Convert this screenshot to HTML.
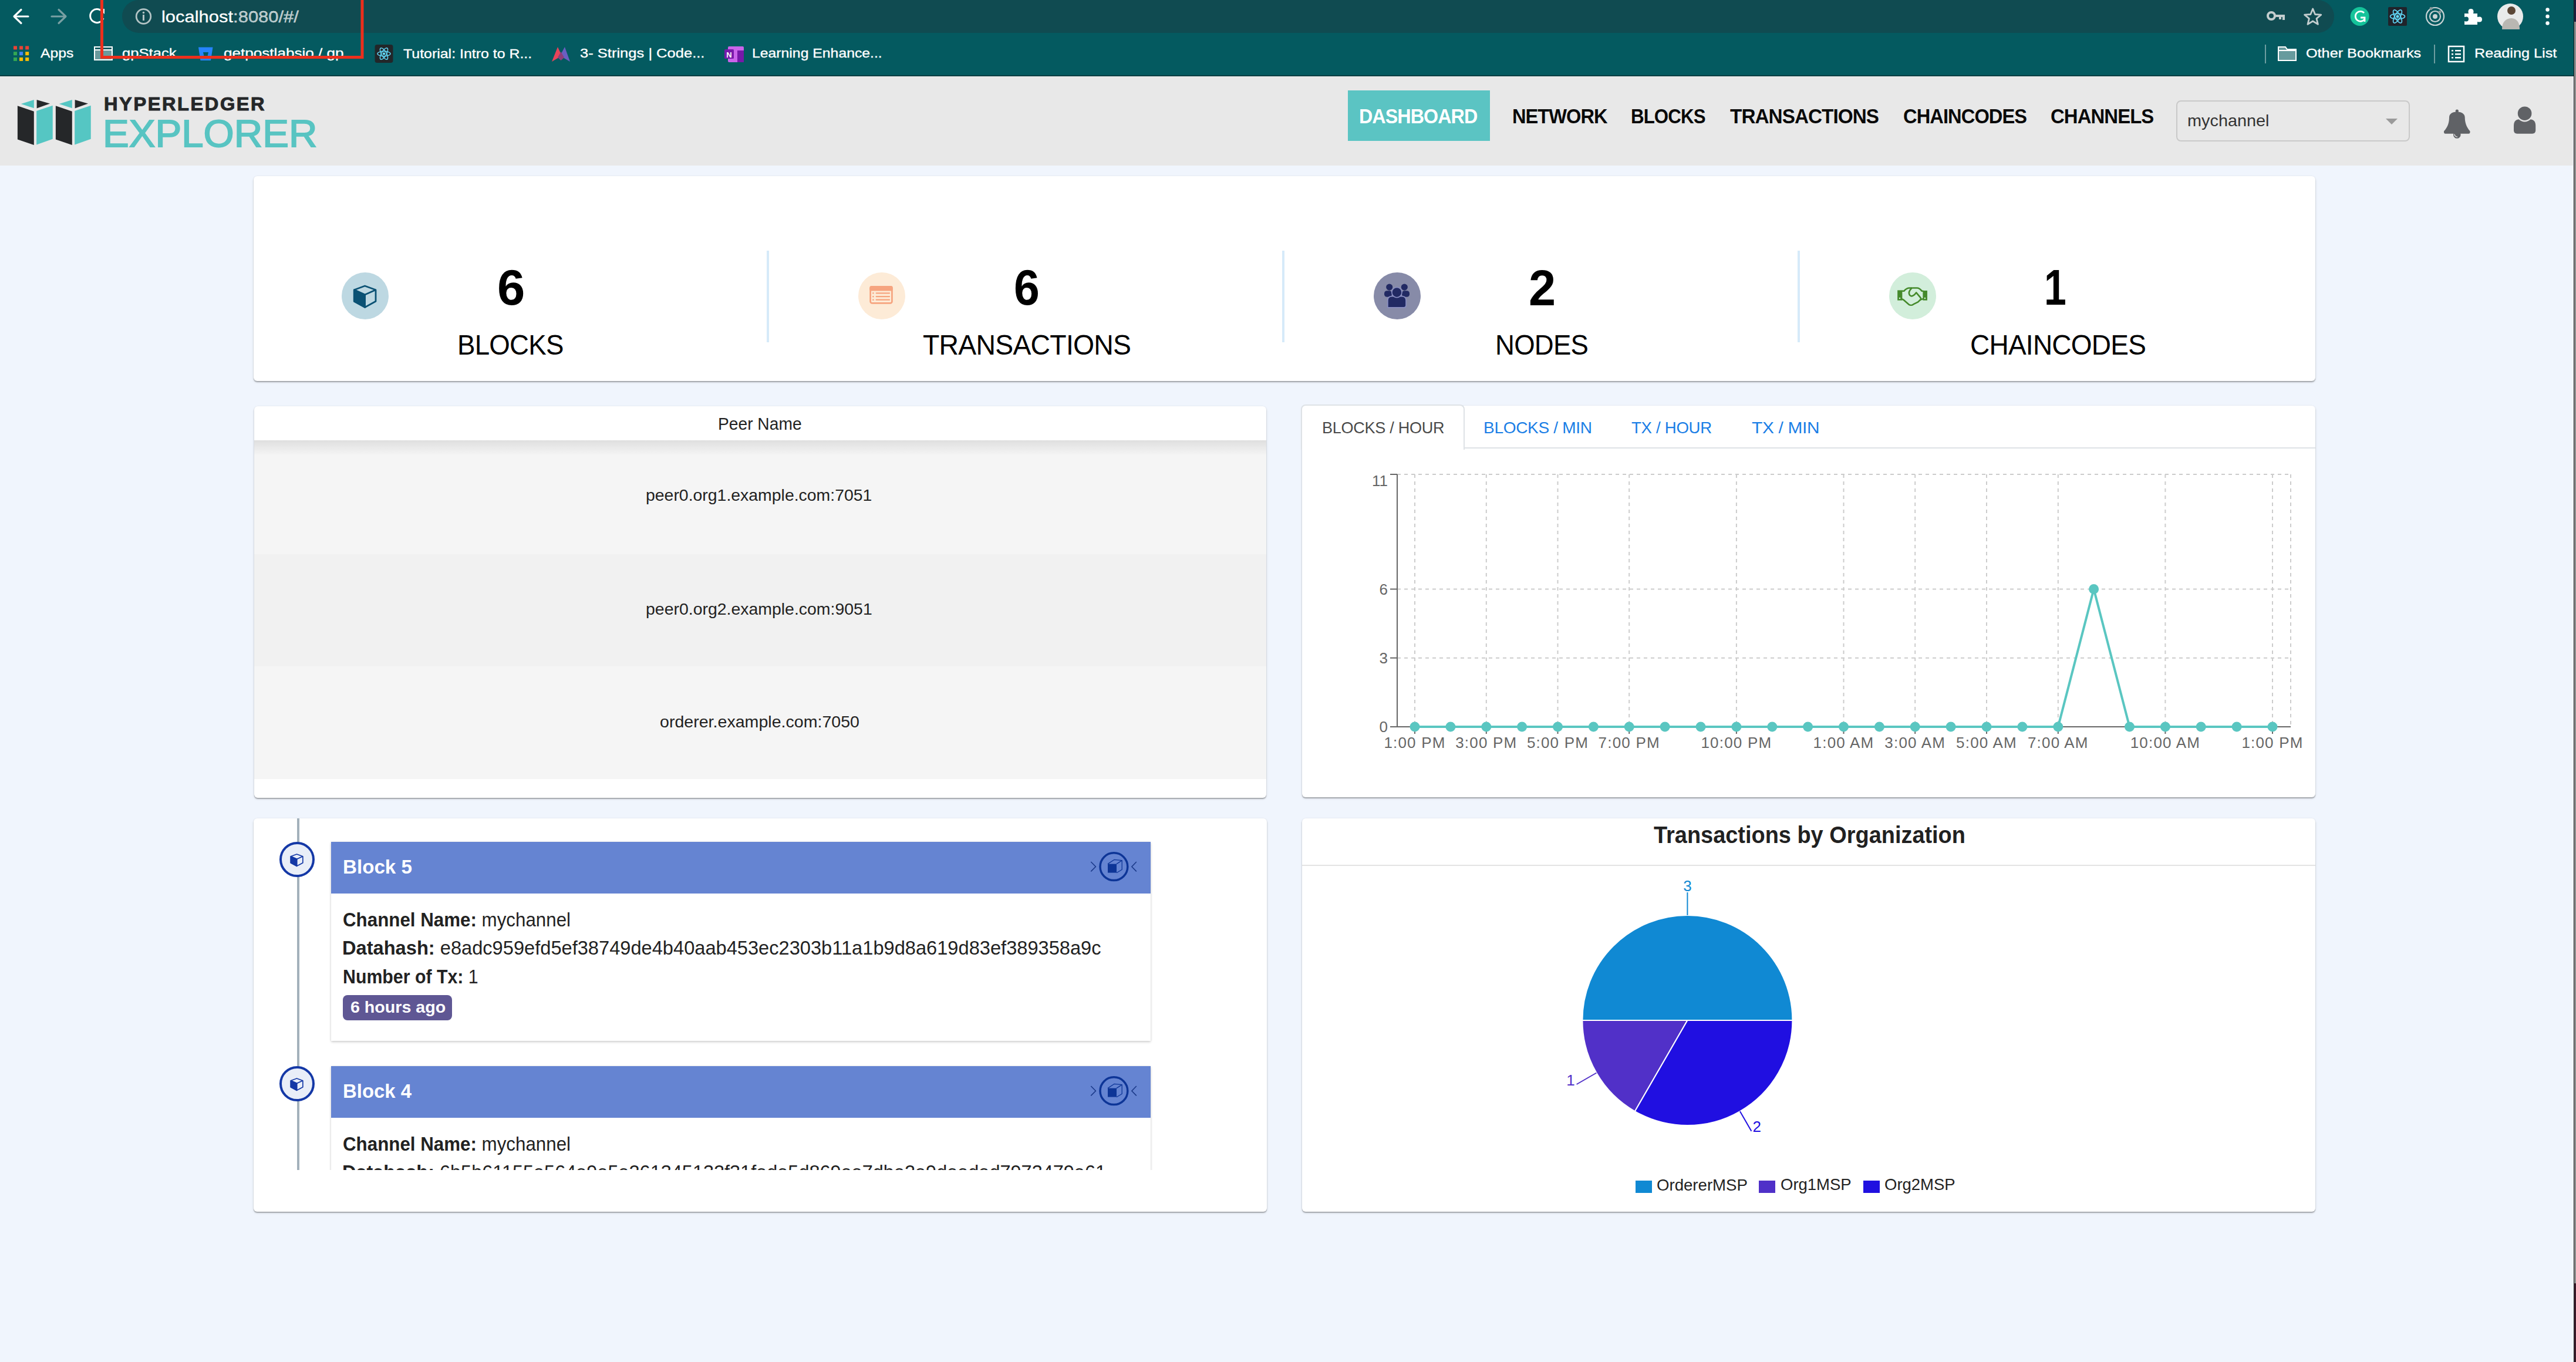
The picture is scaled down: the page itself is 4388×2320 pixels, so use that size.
<!DOCTYPE html>
<html><head><meta charset="utf-8">
<style>
html,body{margin:0;padding:0;}
body{width:4388px;height:2320px;position:relative;overflow:hidden;background:#f0f5fd;font-family:"Liberation Sans",sans-serif;color:#000;}
.a{position:absolute;white-space:nowrap;line-height:1;}
.bm{font-size:23px;color:#fff;letter-spacing:1.2px;}
.nav{font-size:35px;font-weight:bold;color:#0a0a0a;}
.card{position:absolute;background:#fff;border-radius:6px;box-shadow:0 2px 1.5px rgba(0,0,0,0.26),0 2px 4px rgba(0,0,0,0.10),0 0 2px rgba(0,0,0,0.08);}
.num{font-size:85px;font-weight:bold;color:#000;}
.lbl{font-size:48px;color:#000;}
.peer{font-size:28px;color:#222;}
.tab{font-size:30px;color:#1a7ae0;}
.bt{font-size:33.5px;font-weight:bold;color:#fff;}
.bd{font-size:32.5px;color:#222;}
.bd b{color:#1c1c1c;}
.ax{font-size:26px;color:#666;}
.lg{font-size:28px;color:#222;}
</style></head>
<body>
<!-- ============ BROWSER CHROME ============ -->
<div class="a" style="left:0;top:0;width:4388px;height:128px;background:#045a60;"></div>
<div class="a" style="left:0;top:128px;width:4388px;height:2px;background:#0b3e43;"></div>
<div class="a" style="left:208px;top:0;width:3768px;height:56px;background:#104b51;border-radius:28px;"></div>
<div id="chrome-text">
</div>
<!-- scrollbar edge -->
<div class="a" style="left:4384px;top:0;width:1px;height:2320px;background:#1a1a1a;"></div>
<div class="a" style="left:4385px;top:0;width:3px;height:2320px;background:#8e8e8e;"></div>
<div class="a" style="left:4385px;top:0;width:3px;height:37px;background:#1f1f3f;"></div>
<div class="a" style="left:4385px;top:2186px;width:3px;height:134px;background:#3b1c2b;"></div>

<!-- ============ APP HEADER ============ -->
<div class="a" style="left:0;top:130px;width:4383px;height:152px;background:#e8e8e8;"></div>
<div class="a" style="left:2296px;top:154px;width:242px;height:86px;background:#5bc4c3;"></div>
<div class="a" style="left:3707px;top:171px;width:394px;height:66px;border:2px solid #c9c9c9;border-radius:8px;"></div>

<!-- ============ STATS CARD ============ -->
<div class="card" style="left:432px;top:300px;width:3512px;height:349px;"></div>
<div class="a" style="left:1306px;top:427px;width:4px;height:156px;background:#d6eaf9;"></div>
<div class="a" style="left:2184px;top:427px;width:4px;height:156px;background:#d6eaf9;"></div>
<div class="a" style="left:3062px;top:427px;width:4px;height:156px;background:#d6eaf9;"></div>
<div class="a" style="left:582px;top:464px;width:80px;height:80px;border-radius:50%;background:#bdd8e2;"></div>
<div class="a" style="left:1462px;top:464px;width:80px;height:80px;border-radius:50%;background:#fdebd7;"></div>
<div class="a" style="left:2340px;top:464px;width:80px;height:80px;border-radius:50%;background:#878ba8;"></div>
<div class="a" style="left:3218px;top:464px;width:80px;height:80px;border-radius:50%;background:#d2eedb;"></div>

<!-- ============ PEER CARD ============ -->
<div class="card" style="left:433px;top:692px;width:1724px;height:667px;overflow:hidden;">
  <div style="position:absolute;left:0;top:58px;width:100%;height:194px;background:#f5f5f5;"></div>
  <div style="position:absolute;left:0;top:252px;width:100%;height:191px;background:#f1f1f1;"></div>
  <div style="position:absolute;left:0;top:443px;width:100%;height:192px;background:#f5f5f5;"></div>
  <div style="position:absolute;left:0;top:58px;width:100%;height:26px;background:linear-gradient(rgba(0,0,0,0.09),rgba(0,0,0,0));"></div>
</div>

<!-- ============ CHART CARD ============ -->
<div class="card" style="left:2218px;top:691px;width:1726px;height:667px;"></div>
<div class="a" style="left:2218px;top:762px;width:1726px;height:2px;background:#dee2e6;"></div>
<div class="a" style="left:2216px;top:689px;width:275px;height:75px;background:#fff;border:2px solid #dee2e6;border-bottom:none;border-radius:8px 8px 0 0;"></div>

<!-- ============ BLOCK LIST CARD ============ -->
<div class="card" style="left:432px;top:1394px;width:1726px;height:670px;"></div>
<div class="a" style="left:432px;top:1394px;width:1726px;height:599px;overflow:hidden;">
  <div style="position:absolute;left:74px;top:0;width:4px;height:599px;background:#a3b1bb;"></div>
  <!-- block 5 -->
  <div style="position:absolute;left:132px;top:40px;width:1396px;height:339px;background:#fff;box-shadow:0 2px 4px rgba(0,0,0,0.18),0 0 3px rgba(0,0,0,0.08);"></div>
  <div style="position:absolute;left:132px;top:40px;width:1396px;height:88px;background:#6584d2;"></div>
  <!-- block 4 -->
  <div style="position:absolute;left:132px;top:422px;width:1396px;height:339px;background:#fff;box-shadow:0 2px 4px rgba(0,0,0,0.18),0 0 3px rgba(0,0,0,0.08);"></div>
  <div style="position:absolute;left:132px;top:422px;width:1396px;height:88px;background:#6584d2;"></div>
  <div style="position:absolute;left:152px;top:301px;width:186px;height:43px;border-radius:8px;background:#5f5794;"></div>
</div>

<!-- ============ PIE CARD ============ -->
<div class="card" style="left:2218px;top:1394px;width:1726px;height:670px;"></div>
<div class="a" style="left:2218px;top:1473px;width:1726px;height:2px;background:#e3e3e3;"></div>
<div class="a" style="left:2786px;top:2011px;width:28px;height:21px;background:#1089d3;"></div>
<div class="a" style="left:2996px;top:2011px;width:28px;height:21px;background:#4f30c8;"></div>
<div class="a" style="left:3174px;top:2011px;width:28px;height:21px;background:#2010e0;"></div>

<div class="a" style="left:274.8px;top:15.0px;font-size:28px;color:#fff;-webkit-text-stroke:0.3px #fff;transform:scaleX(1.1048);transform-origin:0 0;">localhost<span style="color:#b3c4c6">:8080/#/</span></div>
<div class="a" style="left:69.0px;top:80.0px;font-size:22.5px;color:#fff;-webkit-text-stroke:0.35px #fff;transform:scaleX(1.0980);transform-origin:0 0;">Apps</div>
<div class="a" style="left:207.9px;top:80.0px;font-size:22.5px;color:#fff;-webkit-text-stroke:0.35px #fff;transform:scaleX(1.1375);transform-origin:0 0;">gpStack</div>
<div class="a" style="left:380.8px;top:80.0px;font-size:22.5px;color:#fff;-webkit-text-stroke:0.35px #fff;transform:scaleX(1.1600);transform-origin:0 0;">getpostlabsio / gp</div>
<div class="a" style="left:687.0px;top:81.0px;font-size:22.5px;color:#fff;-webkit-text-stroke:0.35px #fff;transform:scaleX(1.1071);transform-origin:0 0;">Tutorial: Intro to R...</div>
<div class="a" style="left:987.9px;top:80.0px;font-size:22.5px;color:#fff;-webkit-text-stroke:0.35px #fff;transform:scaleX(1.1351);transform-origin:0 0;">3- Strings | Code...</div>
<div class="a" style="left:1280.8px;top:80.0px;font-size:22.5px;color:#fff;-webkit-text-stroke:0.35px #fff;transform:scaleX(1.1010);transform-origin:0 0;">Learning Enhance...</div>
<div class="a" style="left:3927.9px;top:80.0px;font-size:22.5px;color:#fff;-webkit-text-stroke:0.35px #fff;transform:scaleX(1.1207);transform-origin:0 0;">Other Bookmarks</div>
<div class="a" style="left:4214.8px;top:80.0px;font-size:22.5px;color:#fff;-webkit-text-stroke:0.35px #fff;transform:scaleX(1.1220);transform-origin:0 0;">Reading List</div>
<div class="a" style="left:177.0px;top:161.0px;font-size:32px;font-weight:bold;color:#252729;-webkit-text-stroke:1.0px #252729;letter-spacing:2.5px;transform:scaleX(1.0188);transform-origin:0 0;">HYPERLEDGER</div>
<div class="a" style="left:174.8px;top:195.5px;font-size:64.5px;color:#58c4c2;-webkit-text-stroke:1.8px #58c4c2;transform:scaleX(1.0405);transform-origin:0 0;">EXPLORER</div>
<div class="a" style="left:2315.2px;top:180.0px;font-size:35px;font-weight:bold;color:#fff;letter-spacing:-1px;transform:scaleX(0.9213);transform-origin:0 0;">DASHBOARD</div>
<div class="a" style="left:2576.1px;top:180.0px;font-size:35px;font-weight:bold;color:#0a0a0a;letter-spacing:-1px;transform:scaleX(0.9302);transform-origin:0 0;">NETWORK</div>
<div class="a" style="left:2778.2px;top:180.0px;font-size:35px;font-weight:bold;color:#0a0a0a;letter-spacing:-1px;transform:scaleX(0.8929);transform-origin:0 0;">BLOCKS</div>
<div class="a" style="left:2947.0px;top:180.0px;font-size:35px;font-weight:bold;color:#0a0a0a;letter-spacing:-1px;transform:scaleX(0.9511);transform-origin:0 0;">TRANSACTIONS</div>
<div class="a" style="left:3242.1px;top:180.0px;font-size:35px;font-weight:bold;color:#0a0a0a;letter-spacing:-1px;transform:scaleX(0.9330);transform-origin:0 0;">CHAINCODES</div>
<div class="a" style="left:3493.1px;top:180.0px;font-size:35px;font-weight:bold;color:#0a0a0a;letter-spacing:-1px;transform:scaleX(0.9405);transform-origin:0 0;">CHANNELS</div>
<div class="a" style="left:3725.9px;top:191.5px;font-size:28px;color:#333;transform:scaleX(1.0303);transform-origin:0 0;">mychannel</div>
<div class="a" style="left:847.0px;top:447.0px;font-size:85px;font-weight:bold;color:#000;transform:scaleX(1.0000);transform-origin:0 0;">6</div>
<div class="a" style="left:779.2px;top:563.0px;font-size:48.5px;color:#000;letter-spacing:-0.8px;transform:scaleX(0.9412);transform-origin:0 0;">BLOCKS</div>
<div class="a" style="left:1727.2px;top:447.0px;font-size:85px;font-weight:bold;color:#000;transform:scaleX(0.9268);transform-origin:0 0;">6</div>
<div class="a" style="left:1572.0px;top:563.0px;font-size:48.5px;color:#000;letter-spacing:-0.8px;transform:scaleX(0.9565);transform-origin:0 0;">TRANSACTIONS</div>
<div class="a" style="left:2604.1px;top:448.0px;font-size:85px;font-weight:bold;color:#000;transform:scaleX(0.9756);transform-origin:0 0;">2</div>
<div class="a" style="left:2547.2px;top:563.0px;font-size:48.5px;color:#000;letter-spacing:-0.8px;transform:scaleX(0.9387);transform-origin:0 0;">NODES</div>
<div class="a" style="left:3482.0px;top:447.0px;font-size:85px;font-weight:bold;color:#000;transform:scaleX(0.8000);transform-origin:0 0;">1</div>
<div class="a" style="left:3356.1px;top:563.0px;font-size:48.5px;color:#000;letter-spacing:-0.8px;transform:scaleX(0.9487);transform-origin:0 0;">CHAINCODES</div>
<div class="a" style="left:1223.1px;top:708.0px;font-size:29px;color:#222;transform:scaleX(0.9720);transform-origin:0 0;">Peer Name</div>
<div class="a" style="left:1099.5px;top:830.3px;font-size:28px;color:#222;transform:scaleX(1.0146);transform-origin:0 0;">peer0.org1.example.com:7051</div>
<div class="a" style="left:1099.5px;top:1023.7px;font-size:28px;color:#222;transform:scaleX(1.0156);transform-origin:0 0;">peer0.org2.example.com:9051</div>
<div class="a" style="left:1124.3px;top:1216.0px;font-size:28px;color:#222;transform:scaleX(1.0208);transform-origin:0 0;">orderer.example.com:7050</div>
<div class="a" style="left:2251.7px;top:715.4px;font-size:28px;color:#4a4a4a;letter-spacing:-0.3px;transform:scaleX(0.9660);transform-origin:0 0;">BLOCKS / HOUR</div>
<div class="a" style="left:2526.6px;top:715.4px;font-size:28px;color:#1a7ee6;letter-spacing:-0.3px;transform:scaleX(1.0006);transform-origin:0 0;">BLOCKS / MIN</div>
<div class="a" style="left:2779.0px;top:715.4px;font-size:28px;color:#1a7ee6;letter-spacing:-0.3px;transform:scaleX(0.9854);transform-origin:0 0;">TX / HOUR</div>
<div class="a" style="left:2983.9px;top:715.4px;font-size:28px;color:#1a7ee6;letter-spacing:-0.3px;transform:scaleX(1.0667);transform-origin:0 0;">TX / MIN</div>
<div class="a" style="left:583.9px;top:1459.2px;font-size:34px;font-weight:bold;color:#fff;transform:scaleX(0.9754);transform-origin:0 0;">Block 5</div>
<div class="a" style="left:584.4px;top:1551.3px;font-size:32.5px;color:#222;transform:scaleX(0.9633);transform-origin:0 0;"><b>Channel Name:</b> mychannel</div>
<div class="a" style="left:583.4px;top:1599.0px;font-size:32.5px;color:#222;transform:scaleX(1.0036);transform-origin:0 0;"><b>Datahash:</b> e8adc959efd5ef38749de4b40aab453ec2303b11a1b9d8a619d83ef389358a9c</div>
<div class="a" style="left:583.5px;top:1648.0px;font-size:32.5px;color:#222;transform:scaleX(0.9324);transform-origin:0 0;"><b>Number of Tx:</b> 1</div>
<div class="a" style="left:596.5px;top:1702.2px;font-size:27.5px;font-weight:bold;color:#fff;transform:scaleX(1.0409);transform-origin:0 0;">6 hours ago</div>
<div class="a" style="left:584.0px;top:1841.2px;font-size:34px;font-weight:bold;color:#fff;transform:scaleX(0.9672);transform-origin:0 0;">Block 4</div>
<div class="a" style="left:584.4px;top:1933.3px;font-size:32.5px;color:#222;transform:scaleX(0.9633);transform-origin:0 0;"><b>Channel Name:</b> mychannel</div>
<div class="a" style="left:583.4px;top:1981.0px;font-size:32.5px;color:#222;transform:scaleX(0.9989);transform-origin:0 0;"><b>Datahash:</b> 6b5b61155a564a9a5a261345132f31fada5d869aa7dba2a9daadad7973479a61</div>
<div class="a" style="left:2816.6px;top:1401.8px;font-size:41px;font-weight:bold;color:#212121;transform:scaleX(0.9248);transform-origin:0 0;">Transactions by Organization</div>
<div class="a" style="left:2821.7px;top:2005.4px;font-size:28px;color:#222;transform:scaleX(0.9858);transform-origin:0 0;">OrdererMSP</div>
<div class="a" style="left:3032.7px;top:2004.4px;font-size:28px;color:#222;transform:scaleX(0.9818);transform-origin:0 0;">Org1MSP</div>
<div class="a" style="left:3209.7px;top:2004.4px;font-size:28px;color:#222;transform:scaleX(0.9818);transform-origin:0 0;">Org2MSP</div>
<div class="a" style="left:440px;top:1993px;width:1710px;height:60px;background:#fff;"></div>
<!-- SVG OVERLAY -->
<svg class="a" style="left:0;top:0;" width="4388" height="2320" viewBox="0 0 4388 2320" id="ov">
<g stroke="#cccccc" stroke-width="2" stroke-dasharray="6 6" fill="none"><line x1="2380" y1="808.0" x2="3902" y2="808.0"/><line x1="2380" y1="1003.5" x2="3902" y2="1003.5"/><line x1="2380" y1="1120.7" x2="3902" y2="1120.7"/><line x1="2410.0" y1="808" x2="2410.0" y2="1238"/><line x1="2531.8" y1="808" x2="2531.8" y2="1238"/><line x1="2653.5" y1="808" x2="2653.5" y2="1238"/><line x1="2775.2" y1="808" x2="2775.2" y2="1238"/><line x1="2957.9" y1="808" x2="2957.9" y2="1238"/><line x1="3140.5" y1="808" x2="3140.5" y2="1238"/><line x1="3262.2" y1="808" x2="3262.2" y2="1238"/><line x1="3384.0" y1="808" x2="3384.0" y2="1238"/><line x1="3505.8" y1="808" x2="3505.8" y2="1238"/><line x1="3688.4" y1="808" x2="3688.4" y2="1238"/><line x1="3871.0" y1="808" x2="3871.0" y2="1238"/><line x1="3902" y1="808" x2="3902" y2="1238"/></g>
<g stroke="#666666" stroke-width="2" fill="none"><line x1="2380" y1="808" x2="2380" y2="1239"/><line x1="2380" y1="1238" x2="3902" y2="1238"/><line x1="2368" y1="808.0" x2="2380" y2="808.0"/><line x1="2368" y1="1003.5" x2="2380" y2="1003.5"/><line x1="2368" y1="1120.7" x2="2380" y2="1120.7"/><line x1="2368" y1="1238.0" x2="2380" y2="1238.0"/><line x1="2410.0" y1="1238" x2="2410.0" y2="1250"/><line x1="2531.8" y1="1238" x2="2531.8" y2="1250"/><line x1="2653.5" y1="1238" x2="2653.5" y2="1250"/><line x1="2775.2" y1="1238" x2="2775.2" y2="1250"/><line x1="2957.9" y1="1238" x2="2957.9" y2="1250"/><line x1="3140.5" y1="1238" x2="3140.5" y2="1250"/><line x1="3262.2" y1="1238" x2="3262.2" y2="1250"/><line x1="3384.0" y1="1238" x2="3384.0" y2="1250"/><line x1="3505.8" y1="1238" x2="3505.8" y2="1250"/><line x1="3688.4" y1="1238" x2="3688.4" y2="1250"/><line x1="3871.0" y1="1238" x2="3871.0" y2="1250"/></g>
<g font-family="Liberation Sans" font-size="26" fill="#666666"><text x="2364" y="827.6" text-anchor="end">11</text><text x="2364" y="1012.5" text-anchor="end">6</text><text x="2364" y="1129.7" text-anchor="end">3</text><text x="2364" y="1247.0" text-anchor="end">0</text></g>
<g font-family="Liberation Sans" font-size="26" fill="#666666" letter-spacing="1.2"><text x="2410.0" y="1273.5" text-anchor="middle">1:00 PM</text><text x="2531.8" y="1273.5" text-anchor="middle">3:00 PM</text><text x="2653.5" y="1273.5" text-anchor="middle">5:00 PM</text><text x="2775.2" y="1273.5" text-anchor="middle">7:00 PM</text><text x="2957.9" y="1273.5" text-anchor="middle">10:00 PM</text><text x="3140.5" y="1273.5" text-anchor="middle">1:00 AM</text><text x="3262.2" y="1273.5" text-anchor="middle">3:00 AM</text><text x="3384.0" y="1273.5" text-anchor="middle">5:00 AM</text><text x="3505.8" y="1273.5" text-anchor="middle">7:00 AM</text><text x="3688.4" y="1273.5" text-anchor="middle">10:00 AM</text><text x="3871.0" y="1273.5" text-anchor="middle">1:00 PM</text></g>
<polyline points="2410.0,1238.0 2470.9,1238.0 2531.8,1238.0 2592.6,1238.0 2653.5,1238.0 2714.4,1238.0 2775.2,1238.0 2836.1,1238.0 2897.0,1238.0 2957.9,1238.0 3018.8,1238.0 3079.6,1238.0 3140.5,1238.0 3201.4,1238.0 3262.2,1238.0 3323.1,1238.0 3384.0,1238.0 3444.9,1238.0 3505.8,1238.0 3566.6,1003.5 3627.5,1238.0 3688.4,1238.0 3749.2,1238.0 3810.1,1238.0 3871.0,1238.0" fill="none" stroke="#5ac6c1" stroke-width="4" stroke-linejoin="round"/>
<g fill="#5ac6c1"><circle cx="2410.0" cy="1238.0" r="8.5"/><circle cx="2470.9" cy="1238.0" r="8.5"/><circle cx="2531.8" cy="1238.0" r="8.5"/><circle cx="2592.6" cy="1238.0" r="8.5"/><circle cx="2653.5" cy="1238.0" r="8.5"/><circle cx="2714.4" cy="1238.0" r="8.5"/><circle cx="2775.2" cy="1238.0" r="8.5"/><circle cx="2836.1" cy="1238.0" r="8.5"/><circle cx="2897.0" cy="1238.0" r="8.5"/><circle cx="2957.9" cy="1238.0" r="8.5"/><circle cx="3018.8" cy="1238.0" r="8.5"/><circle cx="3079.6" cy="1238.0" r="8.5"/><circle cx="3140.5" cy="1238.0" r="8.5"/><circle cx="3201.4" cy="1238.0" r="8.5"/><circle cx="3262.2" cy="1238.0" r="8.5"/><circle cx="3323.1" cy="1238.0" r="8.5"/><circle cx="3384.0" cy="1238.0" r="8.5"/><circle cx="3444.9" cy="1238.0" r="8.5"/><circle cx="3505.8" cy="1238.0" r="8.5"/><circle cx="3566.6" cy="1003.5" r="8.5"/><circle cx="3627.5" cy="1238.0" r="8.5"/><circle cx="3688.4" cy="1238.0" r="8.5"/><circle cx="3749.2" cy="1238.0" r="8.5"/><circle cx="3810.1" cy="1238.0" r="8.5"/><circle cx="3871.0" cy="1238.0" r="8.5"/></g>
<path d="M2874.4,1738 L3053.40,1738.00 A179,179 0 0 0 2695.40,1738.00 Z" fill="#1089d3" stroke="#fff" stroke-width="2"/>
<path d="M2874.4,1738 L2695.40,1738.00 A179,179 0 0 0 2784.90,1893.02 Z" fill="#5130c8" stroke="#fff" stroke-width="2"/>
<path d="M2874.4,1738 L2784.90,1893.02 A179,179 0 0 0 3053.40,1738.00 Z" fill="#200fe1" stroke="#fff" stroke-width="2"/>
<line x1="2874.4" y1="1559.0" x2="2874.4" y2="1520.0" stroke="#1089d3" stroke-width="2"/>
<text x="2874.4" y="1517.5" text-anchor="middle" font-family="Liberation Sans" font-size="26" fill="#1089d3">3</text>
<line x1="2719.4" y1="1827.5" x2="2685.6" y2="1847.0" stroke="#5130c8" stroke-width="2"/>
<text x="2682.6" y="1849.0" text-anchor="end" font-family="Liberation Sans" font-size="26" fill="#5130c8">1</text>
<line x1="2963.9" y1="1893.0" x2="2983.4" y2="1926.8" stroke="#200fe1" stroke-width="2"/>
<text x="2985.4" y="1927.8" text-anchor="start" font-family="Liberation Sans" font-size="26" fill="#200fe1">2</text>
<polygon fill="#252729" points="29.90,180.20 57.80,189.70 57.80,247.00 29.90,237.50"/>
<polygon fill="#55c6c3" points="62.20,189.00 89.75,179.80 89.75,236.70 62.20,246.60"/>
<polygon fill="#55c6c3" points="35.80,176.90 57.80,169.90 57.80,184.20"/>
<polygon fill="#252729" points="62.60,169.90 85.00,176.50 62.60,184.60"/>
<polygon fill="#252729" points="94.90,180.20 122.80,189.70 122.80,247.00 94.90,237.50"/>
<polygon fill="#55c6c3" points="127.20,189.00 154.75,179.80 154.75,236.70 127.20,246.60"/>
<polygon fill="#55c6c3" points="100.80,176.90 122.80,169.90 122.80,184.20"/>
<polygon fill="#252729" points="127.60,169.90 150.00,176.50 127.60,184.60"/>
<polygon points="621.50,487.00 640.00,493.80 640.00,513.20 621.50,523.40 603.30,513.20 603.30,493.80" fill="none" stroke="#0b5274" stroke-width="2.8" stroke-linejoin="round"/><polygon points="603.30,493.80 621.50,502.00 621.50,523.40 603.30,513.20" fill="#0b5274" stroke="#0b5274" stroke-width="2.8" stroke-linejoin="round"/><polyline points="603.30,493.80 621.50,502.00 640.00,493.80" fill="none" stroke="#0b5274" stroke-width="2.8" stroke-linejoin="round"/><line x1="621.50" y1="502.00" x2="621.50" y2="523.40" stroke="#0b5274" stroke-width="2.8"/>
<rect x="1482.6499999999999" y="488.35" width="36.8" height="28.1" rx="3" fill="none" stroke="#f6a47f" stroke-width="2.7"/>
<rect x="1481.3" y="487" width="39.5" height="8.5" rx="3" fill="#f6a47f"/>
<line x1="1492.7" y1="499.3" x2="1515" y2="499.3" stroke="#f6a47f" stroke-width="2.3" stroke-linecap="round"/>
<rect x="1486.2" y="498.1" width="2.4" height="2.4" fill="#f6a47f"/>
<line x1="1492.7" y1="505.2" x2="1515" y2="505.2" stroke="#f6a47f" stroke-width="2.3" stroke-linecap="round"/>
<rect x="1486.2" y="504.0" width="2.4" height="2.4" fill="#f6a47f"/>
<line x1="1492.7" y1="510.7" x2="1515" y2="510.7" stroke="#f6a47f" stroke-width="2.3" stroke-linecap="round"/>
<rect x="1486.2" y="509.5" width="2.4" height="2.4" fill="#f6a47f"/>
<circle cx="2366.7" cy="489.1" r="5.6" fill="#222a63"/>
<circle cx="2392.3" cy="489.1" r="5.6" fill="#222a63"/>
<rect x="2358" y="495.3" width="13" height="10.5" rx="4.5" fill="#222a63"/>
<rect x="2388" y="495.3" width="13" height="10.5" rx="4.5" fill="#222a63"/>
<path d="M2363.9,523.7 L2363.9,512 Q2363.9,504.6 2371,504.6 L2388,504.6 Q2395,504.6 2395,512 L2395,520 Q2395,523.7 2391,523.7 Z" fill="#222a63" stroke="#8b90c4" stroke-width="1.6"/>
<circle cx="2379.4" cy="498.1" r="8.6" fill="#222a63" stroke="#8b90c4" stroke-width="1.6"/>
<rect x="3232.16" y="494.39" width="8.20" height="17.27" fill="#458a2b"/>
<rect x="3275.35" y="495.00" width="7.59" height="16.66" fill="#458a2b"/>
<circle cx="3236.05" cy="507.96" r="1.3" fill="#d2eedb"/>
<circle cx="3278.92" cy="507.96" r="1.3" fill="#d2eedb"/>
<path d="M3240.37,495.81 L3243.14,495.81 C3245.61,492.85 3248.08,490.50 3253.01,490.50 L3256.72,490.50 M3258.57,490.50 L3265.35,490.50 C3269.05,490.50 3271.52,492.85 3273.68,495.81 L3275.53,495.81 M3240.37,509.62 L3242.53,510.74 L3250.55,517.83 C3253.01,520.30 3256.72,520.30 3259.18,518.45 L3267.20,514.44 L3270.29,511.35 C3272.76,509.50 3273.99,509.19 3275.53,509.19 M3256.72,490.50 C3253.01,494.08 3250.55,499.01 3253.01,502.72 C3255.48,505.80 3259.80,504.57 3264.12,498.40 L3271.52,507.03 C3272.45,508.88 3271.52,510.74 3270.29,511.35" fill="none" stroke="#458a2b" stroke-width="2.6" stroke-linecap="round" stroke-linejoin="round"/>
<circle cx="506" cy="1464" r="28" fill="#e9eef8" stroke="#1438a6" stroke-width="4"/>
<polygon points="505.50,1455.00 515.83,1458.80 515.83,1469.64 505.50,1475.34 495.33,1469.64 495.33,1458.80" fill="none" stroke="#1438a6" stroke-width="1.7" stroke-linejoin="round"/><polygon points="495.33,1458.80 505.50,1463.38 505.50,1475.34 495.33,1469.64" fill="#1438a6" stroke="#1438a6" stroke-width="1.7" stroke-linejoin="round"/><polyline points="495.33,1458.80 505.50,1463.38 515.83,1458.80" fill="none" stroke="#1438a6" stroke-width="1.7" stroke-linejoin="round"/><line x1="505.50" y1="1463.38" x2="505.50" y2="1475.34" stroke="#1438a6" stroke-width="1.7"/>
<circle cx="1897.4" cy="1476.2" r="23.4" fill="none" stroke="#0d3597" stroke-width="3.5"/>
<rect x="1887" y="1471.6000000000001" width="15" height="15" fill="#0d3597"/>
<path d="M1887,1471.6000000000001 L1898.2,1464.3 L1911.2,1465.6000000000001 L1902,1471.6000000000001 M1911.2,1465.6000000000001 L1911.2,1481.2 L1902,1486.7" fill="none" stroke="#0d3597" stroke-width="1.3" stroke-linejoin="round"/>
<path d="M1858.3,1468.0 L1866.4,1476.2 L1858.3,1484.4 M1935.8,1468.0 L1927.9,1476.2 L1935.8,1484.4" fill="none" stroke="#1b3a8a" stroke-width="1.6"/>
<circle cx="506" cy="1846" r="28" fill="#e9eef8" stroke="#1438a6" stroke-width="4"/>
<polygon points="505.50,1837.00 515.83,1840.80 515.83,1851.64 505.50,1857.34 495.33,1851.64 495.33,1840.80" fill="none" stroke="#1438a6" stroke-width="1.7" stroke-linejoin="round"/><polygon points="495.33,1840.80 505.50,1845.38 505.50,1857.34 495.33,1851.64" fill="#1438a6" stroke="#1438a6" stroke-width="1.7" stroke-linejoin="round"/><polyline points="495.33,1840.80 505.50,1845.38 515.83,1840.80" fill="none" stroke="#1438a6" stroke-width="1.7" stroke-linejoin="round"/><line x1="505.50" y1="1845.38" x2="505.50" y2="1857.34" stroke="#1438a6" stroke-width="1.7"/>
<circle cx="1897.4" cy="1858.2" r="23.4" fill="none" stroke="#0d3597" stroke-width="3.5"/>
<rect x="1887" y="1853.6000000000001" width="15" height="15" fill="#0d3597"/>
<path d="M1887,1853.6000000000001 L1898.2,1846.3 L1911.2,1847.6000000000001 L1902,1853.6000000000001 M1911.2,1847.6000000000001 L1911.2,1863.2 L1902,1868.7" fill="none" stroke="#0d3597" stroke-width="1.3" stroke-linejoin="round"/>
<path d="M1858.3,1850.0 L1866.4,1858.2 L1858.3,1866.4 M1935.8,1850.0 L1927.9,1858.2 L1935.8,1866.4" fill="none" stroke="#1b3a8a" stroke-width="1.6"/>
<circle cx="4185.3" cy="189.2" r="2.6" fill="#606266"/>
<path d="M4163,223.5 C4170,216 4172,208 4172,200 C4172,193.5 4178,190.5 4185.3,190.5 C4192.5,190.5 4198.7,193.5 4198.7,200 C4198.7,208 4201,216 4207.5,223.5 Q4208,227.7 4205,227.7 L4165.5,227.7 Q4162.5,227.7 4163,223.5 Z" fill="#606266"/>
<circle cx="4185.3" cy="229.5" r="6.3" fill="#606266"/><path d="M4181,228.5 A4.5,4.5 0 0 0 4186,233" fill="none" stroke="#e8e8e8" stroke-width="1.3"/>
<path d="M4282,222 L4282,214 Q4282,203 4293,203 L4308,203 Q4319.2,203 4319.2,214 L4319.2,222 Q4319.2,227.7 4313.5,227.7 L4287.7,227.7 Q4282,227.7 4282,222 Z" fill="#606266"/>
<circle cx="4300.6" cy="193.2" r="13" fill="#606266" stroke="#e8e8e8" stroke-width="2.4"/>
<polygon points="4064,202 4084,202 4074,212" fill="#9a9a9a"/>
<path d="M48,28 H25 M36,16.5 L24,28 L36,39.5" fill="none" stroke="#ffffff" stroke-width="3.2" stroke-linecap="round" stroke-linejoin="round"/>
<path d="M88,28 H111 M100,16.5 L112,28 L100,39.5" fill="none" stroke="#79a0a3" stroke-width="3.2" stroke-linecap="round" stroke-linejoin="round"/>
<path d="M175.5,22 A11.5,11.5 0 1 0 176,31" fill="none" stroke="#ffffff" stroke-width="3"/>
<polygon points="169,15 178,15 178,24" fill="#ffffff"/>
<circle cx="244.5" cy="28" r="12.3" fill="none" stroke="#b3c3c4" stroke-width="2.8"/>
<rect x="243" y="25" width="3" height="10" fill="#b3c3c4"/><circle cx="244.5" cy="21.5" r="1.8" fill="#b3c3c4"/>
<rect x="23" y="78.4" width="6" height="6" fill="#ea4335"/>
<rect x="33.1" y="78.4" width="6" height="6" fill="#ea4335"/>
<rect x="43.2" y="78.4" width="6" height="6" fill="#ea4335"/>
<rect x="23" y="88.2" width="6" height="6" fill="#34a853"/>
<rect x="33.1" y="88.2" width="6" height="6" fill="#4285f4"/>
<rect x="43.2" y="88.2" width="6" height="6" fill="#fbbc05"/>
<rect x="23" y="97.9" width="6" height="6" fill="#34a853"/>
<rect x="33.1" y="97.9" width="6" height="6" fill="#fbbc05"/>
<rect x="43.2" y="97.9" width="6" height="6" fill="#fbbc05"/>
<rect x="161" y="80" width="30" height="22" fill="#6b9a9d" stroke="#ffffff" stroke-width="2"/>
<rect x="161" y="80" width="30" height="5" fill="#035a60" stroke="#ffffff" stroke-width="2"/>
<polygon points="338,80.5 362.5,80.5 359,103 341.5,103" fill="#2684ff"/><polygon points="346,89 355,89 353.5,96 347.5,96" fill="#035a60"/>
<rect x="638.5" y="76" width="31" height="31" rx="4" fill="#222629"/>
<ellipse cx="654" cy="91.5" rx="11" ry="4.2" fill="none" stroke="#61dafb" stroke-width="1.4" transform="rotate(0 654 91.5)"/>
<ellipse cx="654" cy="91.5" rx="11" ry="4.2" fill="none" stroke="#61dafb" stroke-width="1.4" transform="rotate(60 654 91.5)"/>
<ellipse cx="654" cy="91.5" rx="11" ry="4.2" fill="none" stroke="#61dafb" stroke-width="1.4" transform="rotate(120 654 91.5)"/>
<circle cx="654" cy="91.5" r="2.2" fill="#61dafb"/>
<polygon points="940,105 950,80 957,95" fill="#e8445a"/><polygon points="971,105 962,80 954,95" fill="#6a5fc1"/><polygon points="950,98 955.5,88 961,98 955.5,103" fill="#8d3f7a"/>
<rect x="1240" y="79" width="27" height="27" rx="2" fill="#ca64ea"/><rect x="1256" y="86" width="11" height="20" fill="#7719aa"/><rect x="1234" y="84" width="16" height="16" rx="1.5" fill="#7719aa"/><text x="1242" y="97.5" font-family="Liberation Sans" font-weight="bold" font-size="13" fill="#fff" text-anchor="middle">N</text>
<rect x="3858" y="76" width="2" height="32" fill="#6e9ea1"/><rect x="4146" y="76" width="2" height="32" fill="#6e9ea1"/>
<path d="M3881,103 V80 H3893 L3896,84 H3911 V103 Z" fill="#679b9e" stroke="#ffffff" stroke-width="2"/><path d="M3881,86 H3911" stroke="#ffffff" stroke-width="2"/>
<rect x="4171" y="79" width="26" height="26" fill="none" stroke="#ffffff" stroke-width="2.5"/>
<rect x="4176" y="85" width="3" height="2.5" fill="#fff"/><rect x="4182" y="85" width="10" height="2.5" fill="#fff"/>
<rect x="4176" y="91" width="3" height="2.5" fill="#fff"/><rect x="4182" y="91" width="10" height="2.5" fill="#fff"/>
<rect x="4176" y="97" width="3" height="2.5" fill="#fff"/><rect x="4182" y="97" width="10" height="2.5" fill="#fff"/>
<circle cx="3869" cy="27" r="6" fill="none" stroke="#c3cdce" stroke-width="4"/><path d="M3875,27 H3890 V34 M3884,27 V33" fill="none" stroke="#c3cdce" stroke-width="4"/>
<polygon points="3939.7,15 3943.6,24.5 3953.8,25.2 3946,31.6 3948.4,41.4 3939.7,36 3931,41.4 3933.4,31.6 3925.6,25.2 3935.8,24.5" fill="none" stroke="#c3cdce" stroke-width="2.8" stroke-linejoin="round"/>
<circle cx="4019.7" cy="28" r="16" fill="#15c39a"/><path d="M4027,22 A8.5,8.5 0 1 0 4027.5,33 M4021,30 H4028 V37" fill="none" stroke="#fff" stroke-width="2.8"/>
<rect x="4068" y="12" width="32" height="32" rx="2" fill="#20232a"/>
<ellipse cx="4084" cy="28" rx="12.5" ry="4.6" fill="none" stroke="#61dafb" stroke-width="1.6" transform="rotate(0 4084 28)"/>
<ellipse cx="4084" cy="28" rx="12.5" ry="4.6" fill="none" stroke="#61dafb" stroke-width="1.6" transform="rotate(60 4084 28)"/>
<ellipse cx="4084" cy="28" rx="12.5" ry="4.6" fill="none" stroke="#61dafb" stroke-width="1.6" transform="rotate(120 4084 28)"/>
<circle cx="4084" cy="28" r="2.6" fill="#61dafb"/>
<circle cx="4148" cy="28" r="15" fill="none" stroke="#c8d3d4" stroke-width="2.2"/><circle cx="4148" cy="28" r="9" fill="none" stroke="#c8d3d4" stroke-width="2.2"/><circle cx="4148" cy="28" r="4" fill="#c8d3d4"/><circle cx="4141" cy="14.5" r="2.5" fill="#8a9a9b"/><circle cx="4156" cy="20.5" r="2.5" fill="#8a9a9b"/>
<path d="M4198,23 H4205 Q4203,15 4209,15 Q4215,15 4213,23 H4220 V29 Q4228,27 4228,33 Q4228,39 4220,37 V42 H4198 V36 Q4205,38 4205,32.5 Q4205,27 4198,29 Z" fill="#ffffff"/>
<circle cx="4276" cy="28" r="22" fill="#e9eaea"/><circle cx="4278" cy="18" r="7" fill="#5b4636"/><path d="M4262,50 Q4262,32 4278,31 Q4292,32 4292,50 Z" fill="#b9b7b2"/>
<circle cx="4339.5" cy="16.5" r="3.2" fill="#ffffff"/>
<circle cx="4339.5" cy="28" r="3.2" fill="#ffffff"/>
<circle cx="4339.5" cy="39.5" r="3.2" fill="#ffffff"/>
<path d="M173.5,-10 V97.5 H617 V-10" fill="none" stroke="#ec2f1c" stroke-width="5"/>
</svg>
</body></html>
